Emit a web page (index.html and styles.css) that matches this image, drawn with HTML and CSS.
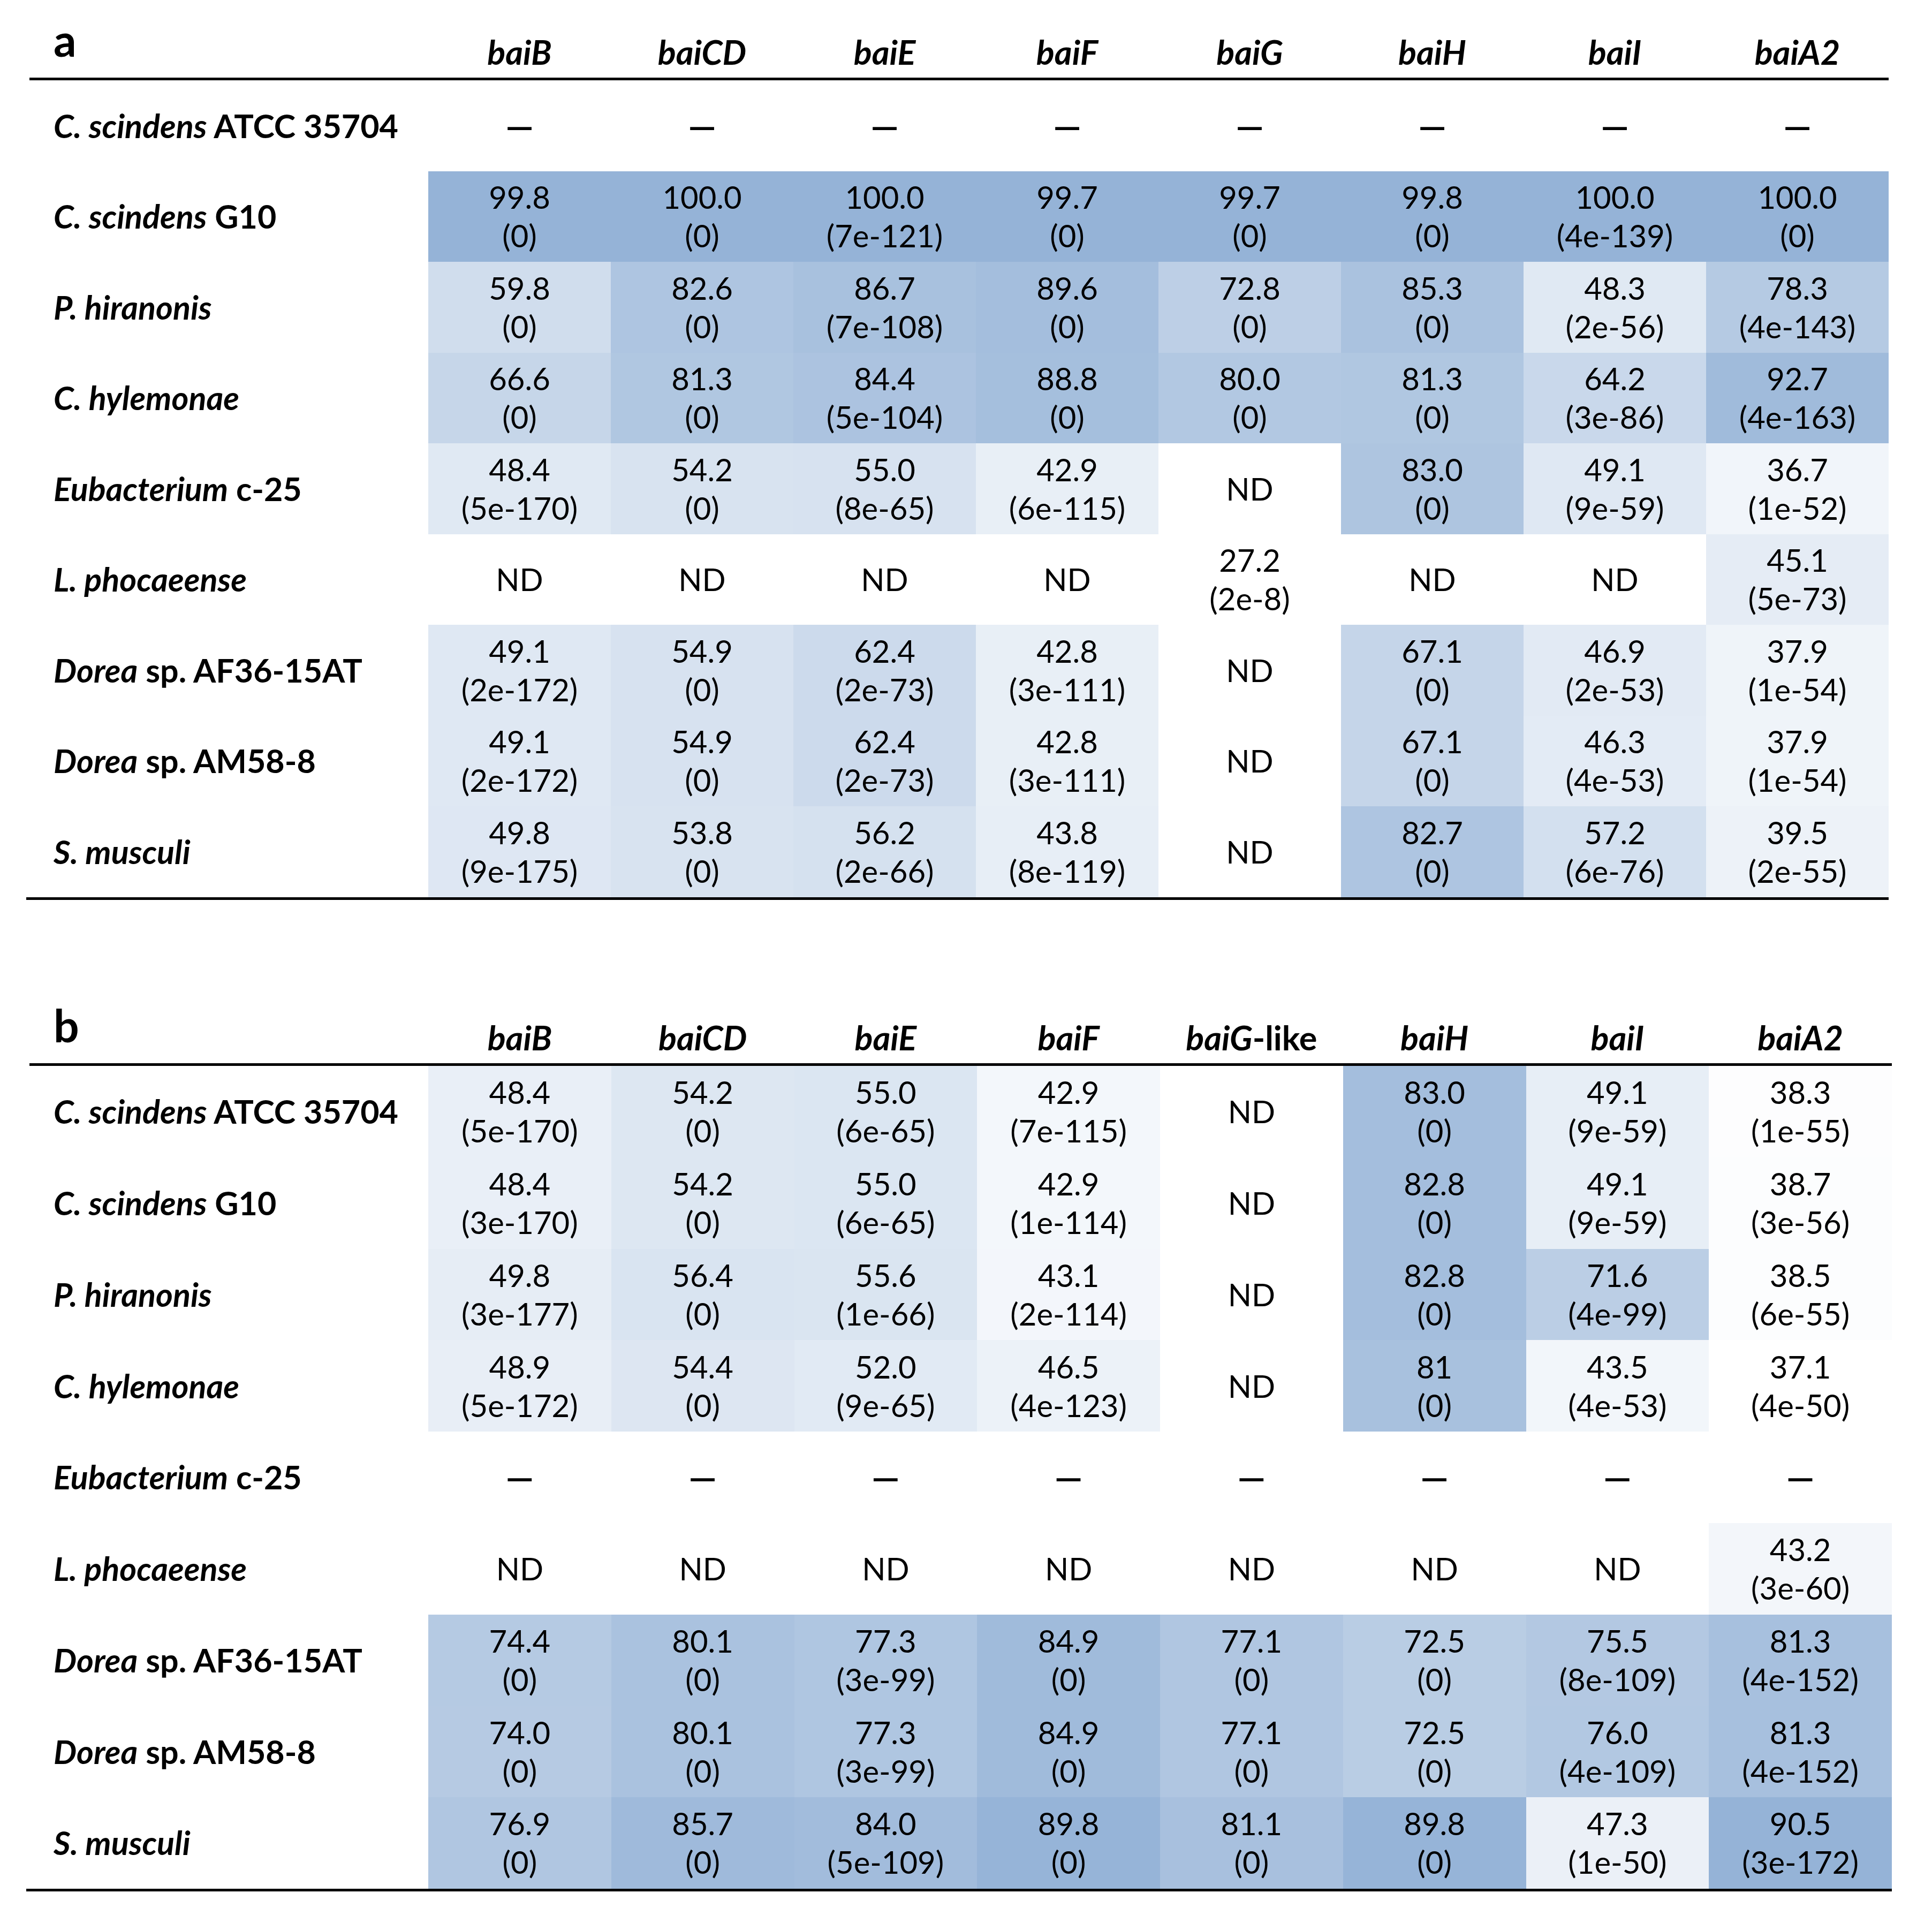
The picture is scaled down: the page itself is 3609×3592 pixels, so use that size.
FILE: index.html
```html
<!DOCTYPE html>
<html lang="en">
<head>
<meta charset="utf-8">
<title>bai gene identity tables</title>
<link rel="stylesheet" href="styles.css">
<script src="script.js" defer></script>
</head>
<body>
<div class="page">

<section class="panel panel-a">
  <div class="head">
    <div class="tag">a</div>
    <div class="gene"><i>baiB</i></div>
    <div class="gene"><i>baiCD</i></div>
    <div class="gene"><i>baiE</i></div>
    <div class="gene"><i>baiF</i></div>
    <div class="gene"><i>baiG</i></div>
    <div class="gene"><i>baiH</i></div>
    <div class="gene"><i>baiI</i></div>
    <div class="gene"><i>baiA2</i></div>
  </div>
  <div class="grid">
    <div class="sp"><i>C. scindens</i>&nbsp;ATCC 35704</div>
    <div class="c dash">—</div><div class="c dash">—</div><div class="c dash">—</div><div class="c dash">—</div><div class="c dash">—</div><div class="c dash">—</div><div class="c dash">—</div><div class="c dash">—</div>

    <div class="sp"><i>C. scindens</i>&nbsp;G10</div>
    <div class="c v"><span>99.8</span><span>(0)</span></div>
    <div class="c v"><span>100.0</span><span>(0)</span></div>
    <div class="c v"><span>100.0</span><span>(7e-121)</span></div>
    <div class="c v"><span>99.7</span><span>(0)</span></div>
    <div class="c v"><span>99.7</span><span>(0)</span></div>
    <div class="c v"><span>99.8</span><span>(0)</span></div>
    <div class="c v"><span>100.0</span><span>(4e-139)</span></div>
    <div class="c v"><span>100.0</span><span>(0)</span></div>

    <div class="sp"><i>P. hiranonis</i></div>
    <div class="c v"><span>59.8</span><span>(0)</span></div>
    <div class="c v"><span>82.6</span><span>(0)</span></div>
    <div class="c v"><span>86.7</span><span>(7e-108)</span></div>
    <div class="c v"><span>89.6</span><span>(0)</span></div>
    <div class="c v"><span>72.8</span><span>(0)</span></div>
    <div class="c v"><span>85.3</span><span>(0)</span></div>
    <div class="c v"><span>48.3</span><span>(2e-56)</span></div>
    <div class="c v"><span>78.3</span><span>(4e-143)</span></div>

    <div class="sp"><i>C. hylemonae</i></div>
    <div class="c v"><span>66.6</span><span>(0)</span></div>
    <div class="c v"><span>81.3</span><span>(0)</span></div>
    <div class="c v"><span>84.4</span><span>(5e-104)</span></div>
    <div class="c v"><span>88.8</span><span>(0)</span></div>
    <div class="c v"><span>80.0</span><span>(0)</span></div>
    <div class="c v"><span>81.3</span><span>(0)</span></div>
    <div class="c v"><span>64.2</span><span>(3e-86)</span></div>
    <div class="c v"><span>92.7</span><span>(4e-163)</span></div>

    <div class="sp"><i>Eubacterium</i>&nbsp;c-25</div>
    <div class="c v"><span>48.4</span><span>(5e-170)</span></div>
    <div class="c v"><span>54.2</span><span>(0)</span></div>
    <div class="c v"><span>55.0</span><span>(8e-65)</span></div>
    <div class="c v"><span>42.9</span><span>(6e-115)</span></div>
    <div class="c">ND</div>
    <div class="c v"><span>83.0</span><span>(0)</span></div>
    <div class="c v"><span>49.1</span><span>(9e-59)</span></div>
    <div class="c v"><span>36.7</span><span>(1e-52)</span></div>

    <div class="sp"><i>L. phocaeense</i></div>
    <div class="c">ND</div>
    <div class="c">ND</div>
    <div class="c">ND</div>
    <div class="c">ND</div>
    <div class="c v"><span>27.2</span><span>(2e-8)</span></div>
    <div class="c">ND</div>
    <div class="c">ND</div>
    <div class="c v"><span>45.1</span><span>(5e-73)</span></div>

    <div class="sp"><i>Dorea</i>&nbsp;sp. AF36-15AT</div>
    <div class="c v"><span>49.1</span><span>(2e-172)</span></div>
    <div class="c v"><span>54.9</span><span>(0)</span></div>
    <div class="c v"><span>62.4</span><span>(2e-73)</span></div>
    <div class="c v"><span>42.8</span><span>(3e-111)</span></div>
    <div class="c">ND</div>
    <div class="c v"><span>67.1</span><span>(0)</span></div>
    <div class="c v"><span>46.9</span><span>(2e-53)</span></div>
    <div class="c v"><span>37.9</span><span>(1e-54)</span></div>

    <div class="sp"><i>Dorea</i>&nbsp;sp. AM58-8</div>
    <div class="c v"><span>49.1</span><span>(2e-172)</span></div>
    <div class="c v"><span>54.9</span><span>(0)</span></div>
    <div class="c v"><span>62.4</span><span>(2e-73)</span></div>
    <div class="c v"><span>42.8</span><span>(3e-111)</span></div>
    <div class="c">ND</div>
    <div class="c v"><span>67.1</span><span>(0)</span></div>
    <div class="c v"><span>46.3</span><span>(4e-53)</span></div>
    <div class="c v"><span>37.9</span><span>(1e-54)</span></div>

    <div class="sp"><i>S. musculi</i></div>
    <div class="c v"><span>49.8</span><span>(9e-175)</span></div>
    <div class="c v"><span>53.8</span><span>(0)</span></div>
    <div class="c v"><span>56.2</span><span>(2e-66)</span></div>
    <div class="c v"><span>43.8</span><span>(8e-119)</span></div>
    <div class="c">ND</div>
    <div class="c v"><span>82.7</span><span>(0)</span></div>
    <div class="c v"><span>57.2</span><span>(6e-76)</span></div>
    <div class="c v"><span>39.5</span><span>(2e-55)</span></div>
  </div>
</section>

<section class="panel panel-b">
  <div class="head">
    <div class="tag">b</div>
    <div class="gene"><i>baiB</i></div>
    <div class="gene"><i>baiCD</i></div>
    <div class="gene"><i>baiE</i></div>
    <div class="gene"><i>baiF</i></div>
    <div class="gene"><i>baiG</i>-like</div>
    <div class="gene"><i>baiH</i></div>
    <div class="gene"><i>baiI</i></div>
    <div class="gene"><i>baiA2</i></div>
  </div>
  <div class="grid">
    <div class="sp"><i>C. scindens</i>&nbsp;ATCC 35704</div>
    <div class="c v"><span>48.4</span><span>(5e-170)</span></div>
    <div class="c v"><span>54.2</span><span>(0)</span></div>
    <div class="c v"><span>55.0</span><span>(6e-65)</span></div>
    <div class="c v"><span>42.9</span><span>(7e-115)</span></div>
    <div class="c">ND</div>
    <div class="c v"><span>83.0</span><span>(0)</span></div>
    <div class="c v"><span>49.1</span><span>(9e-59)</span></div>
    <div class="c v"><span>38.3</span><span>(1e-55)</span></div>

    <div class="sp"><i>C. scindens</i>&nbsp;G10</div>
    <div class="c v"><span>48.4</span><span>(3e-170)</span></div>
    <div class="c v"><span>54.2</span><span>(0)</span></div>
    <div class="c v"><span>55.0</span><span>(6e-65)</span></div>
    <div class="c v"><span>42.9</span><span>(1e-114)</span></div>
    <div class="c">ND</div>
    <div class="c v"><span>82.8</span><span>(0)</span></div>
    <div class="c v"><span>49.1</span><span>(9e-59)</span></div>
    <div class="c v"><span>38.7</span><span>(3e-56)</span></div>

    <div class="sp"><i>P. hiranonis</i></div>
    <div class="c v"><span>49.8</span><span>(3e-177)</span></div>
    <div class="c v"><span>56.4</span><span>(0)</span></div>
    <div class="c v"><span>55.6</span><span>(1e-66)</span></div>
    <div class="c v"><span>43.1</span><span>(2e-114)</span></div>
    <div class="c">ND</div>
    <div class="c v"><span>82.8</span><span>(0)</span></div>
    <div class="c v"><span>71.6</span><span>(4e-99)</span></div>
    <div class="c v"><span>38.5</span><span>(6e-55)</span></div>

    <div class="sp"><i>C. hylemonae</i></div>
    <div class="c v"><span>48.9</span><span>(5e-172)</span></div>
    <div class="c v"><span>54.4</span><span>(0)</span></div>
    <div class="c v"><span>52.0</span><span>(9e-65)</span></div>
    <div class="c v"><span>46.5</span><span>(4e-123)</span></div>
    <div class="c">ND</div>
    <div class="c v"><span>81</span><span>(0)</span></div>
    <div class="c v"><span>43.5</span><span>(4e-53)</span></div>
    <div class="c v"><span>37.1</span><span>(4e-50)</span></div>

    <div class="sp"><i>Eubacterium</i>&nbsp;c-25</div>
    <div class="c dash">—</div><div class="c dash">—</div><div class="c dash">—</div><div class="c dash">—</div><div class="c dash">—</div><div class="c dash">—</div><div class="c dash">—</div><div class="c dash">—</div>

    <div class="sp"><i>L. phocaeense</i></div>
    <div class="c">ND</div>
    <div class="c">ND</div>
    <div class="c">ND</div>
    <div class="c">ND</div>
    <div class="c">ND</div>
    <div class="c">ND</div>
    <div class="c">ND</div>
    <div class="c v"><span>43.2</span><span>(3e-60)</span></div>

    <div class="sp"><i>Dorea</i>&nbsp;sp. AF36-15AT</div>
    <div class="c v"><span>74.4</span><span>(0)</span></div>
    <div class="c v"><span>80.1</span><span>(0)</span></div>
    <div class="c v"><span>77.3</span><span>(3e-99)</span></div>
    <div class="c v"><span>84.9</span><span>(0)</span></div>
    <div class="c v"><span>77.1</span><span>(0)</span></div>
    <div class="c v"><span>72.5</span><span>(0)</span></div>
    <div class="c v"><span>75.5</span><span>(8e-109)</span></div>
    <div class="c v"><span>81.3</span><span>(4e-152)</span></div>

    <div class="sp"><i>Dorea</i>&nbsp;sp. AM58-8</div>
    <div class="c v"><span>74.0</span><span>(0)</span></div>
    <div class="c v"><span>80.1</span><span>(0)</span></div>
    <div class="c v"><span>77.3</span><span>(3e-99)</span></div>
    <div class="c v"><span>84.9</span><span>(0)</span></div>
    <div class="c v"><span>77.1</span><span>(0)</span></div>
    <div class="c v"><span>72.5</span><span>(0)</span></div>
    <div class="c v"><span>76.0</span><span>(4e-109)</span></div>
    <div class="c v"><span>81.3</span><span>(4e-152)</span></div>

    <div class="sp"><i>S. musculi</i></div>
    <div class="c v"><span>76.9</span><span>(0)</span></div>
    <div class="c v"><span>85.7</span><span>(0)</span></div>
    <div class="c v"><span>84.0</span><span>(5e-109)</span></div>
    <div class="c v"><span>89.8</span><span>(0)</span></div>
    <div class="c v"><span>81.1</span><span>(0)</span></div>
    <div class="c v"><span>89.8</span><span>(0)</span></div>
    <div class="c v"><span>47.3</span><span>(1e-50)</span></div>
    <div class="c v"><span>90.5</span><span>(3e-172)</span></div>
  </div>
</section>

</div>
</body>
</html>
```

FILE: styles.css
```css
html, body {
  margin: 0;
  padding: 0;
  background: #ffffff;
}

body {
  font-family: Lato, "Open Sans", "Liberation Sans", sans-serif;
  color: #000000;
  font-size: 58px;
}

.page {
  padding-left: 49px;
}

.panel-a {
  --col: 341px;
  --row: 169.5px;
  width: 3479px;
}

.panel-b {
  --col: 341.75px;
  --row: 170.75px;
  width: 3485px;
  margin-top: 160.5px;
}

.head {
  display: grid;
  grid-template-columns: 745px repeat(8, var(--col));
  align-items: end;
  height: 145px;
  margin-left: 6px;
  border-bottom: 5px solid #000000;
}

.tag {
  font-size: 84px;
  font-weight: 700;
  line-height: 84px;
  padding-left: 45px;
  padding-bottom: 29px;
}

.gene {
  text-align: center;
  font-size: 63px;
  font-weight: 700;
  line-height: 72px;
  padding-bottom: 12px;
  white-space: nowrap;
}

.gene i,
.sp i {
  font-style: italic;
}

.grid {
  display: grid;
  grid-template-columns: 751px repeat(8, var(--col));
  grid-auto-rows: var(--row);
  border-bottom: 5px solid #000000;
}

.sp {
  display: flex;
  align-items: center;
  padding-left: 51px;
  font-size: 61px;
  font-weight: 700;
  line-height: 72px;
  white-space: nowrap;
}

.c {
  display: flex;
  flex-direction: column;
  align-items: center;
  justify-content: center;
  line-height: 72px;
  text-align: center;
  white-space: nowrap;
}

.dash {
  font-size: 66px;
  font-weight: 700;
}
```

FILE: script.js
```js
(function () {
  var lo = [255, 255, 255];
  var hi = [149, 179, 215];
  var panels = document.querySelectorAll('.panel');
  for (var p = 0; p < panels.length; p++) {
    var cells = panels[p].querySelectorAll('.v');
    var vals = [];
    var min = Infinity, max = -Infinity;
    for (var i = 0; i < cells.length; i++) {
      var v = parseFloat(cells[i].firstElementChild.textContent);
      vals.push(v);
      if (v < min) min = v;
      if (v > max) max = v;
    }
    for (var j = 0; j < cells.length; j++) {
      var t = (vals[j] - min) / (max - min);
      var r = Math.round(lo[0] + (hi[0] - lo[0]) * t);
      var g = Math.round(lo[1] + (hi[1] - lo[1]) * t);
      var b = Math.round(lo[2] + (hi[2] - lo[2]) * t);
      cells[j].style.backgroundColor = 'rgb(' + r + ',' + g + ',' + b + ')';
    }
  }
})();
```
